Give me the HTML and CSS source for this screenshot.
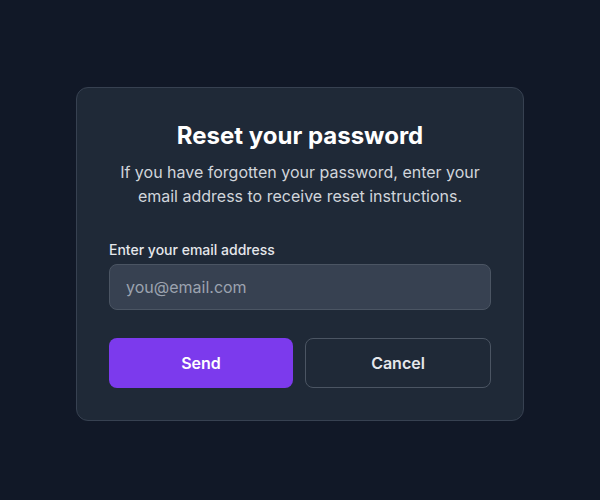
FILE: index.html
```html
<!DOCTYPE html>
<html lang="en">
<head>
    <meta charset="UTF-8">
    <meta name="viewport" content="width=device-width, initial-scale=1.0">
    <title>Reset your password</title>
    <link rel="stylesheet" href="styles.css">
</head>
<body>
    <div class="card">
        <h1 class="title">Reset your password</h1>
        <p class="subtitle">If you have forgotten your password, enter your email address to receive reset instructions.</p>
        <form class="form">
            <label class="label" for="email">Enter your email address</label>
            <input class="input" type="email" id="email" placeholder="you@email.com">
            <div class="actions">
                <button type="submit" class="btn btn-primary">Send</button>
                <button type="button" class="btn btn-secondary">Cancel</button>
            </div>
        </form>
    </div>
</body>
</html>
```

FILE: styles.css
```css
* {
    box-sizing: border-box;
}

body {
    font-family: Inter, "Noto Sans", sans-serif;
    margin: 0;
    padding-top: 87px;
    height: 100vh;
    background-color: #111827;
    color: #f9fafb;
}

.card {
    width: 448px;
    margin: 0 auto;
    padding: 32px;
    background-color: #1f2937;
    border: 1px solid #374151;
    border-radius: 12px;
    text-align: center;
}

.title {
    margin: 0;
    font-size: 24px;
    line-height: 32px;
    font-weight: 700;
    color: #ffffff;
}

.subtitle {
    margin: 8px 0 0;
    font-size: 16px;
    line-height: 24px;
    color: #d1d5db;
}

.form {
    margin-top: 32px;
    text-align: left;
}

.label {
    display: block;
    font-size: 14px;
    line-height: 20px;
    font-weight: 500;
    color: #e5e7eb;
    margin-bottom: 4px;
}

.input {
    display: block;
    width: 100%;
    height: 46px;
    padding: 0 16px;
    font-family: inherit;
    font-size: 16px;
    color: #f9fafb;
    background-color: #374151;
    border: 1px solid #4b5563;
    border-radius: 8px;
    outline: none;
}

.input::placeholder {
    color: #9ca3af;
}

.actions {
    display: flex;
    gap: 12px;
    margin-top: 28px;
}

.btn {
    flex: 1;
    height: 50px;
    font-family: inherit;
    font-size: 16px;
    font-weight: 600;
    border-radius: 8px;
    cursor: pointer;
}

.btn-primary {
    background-color: #7c3aed;
    border: none;
    color: #ffffff;
}

.btn-secondary {
    background-color: transparent;
    border: 1px solid #4b5563;
    color: #e5e7eb;
}
```
